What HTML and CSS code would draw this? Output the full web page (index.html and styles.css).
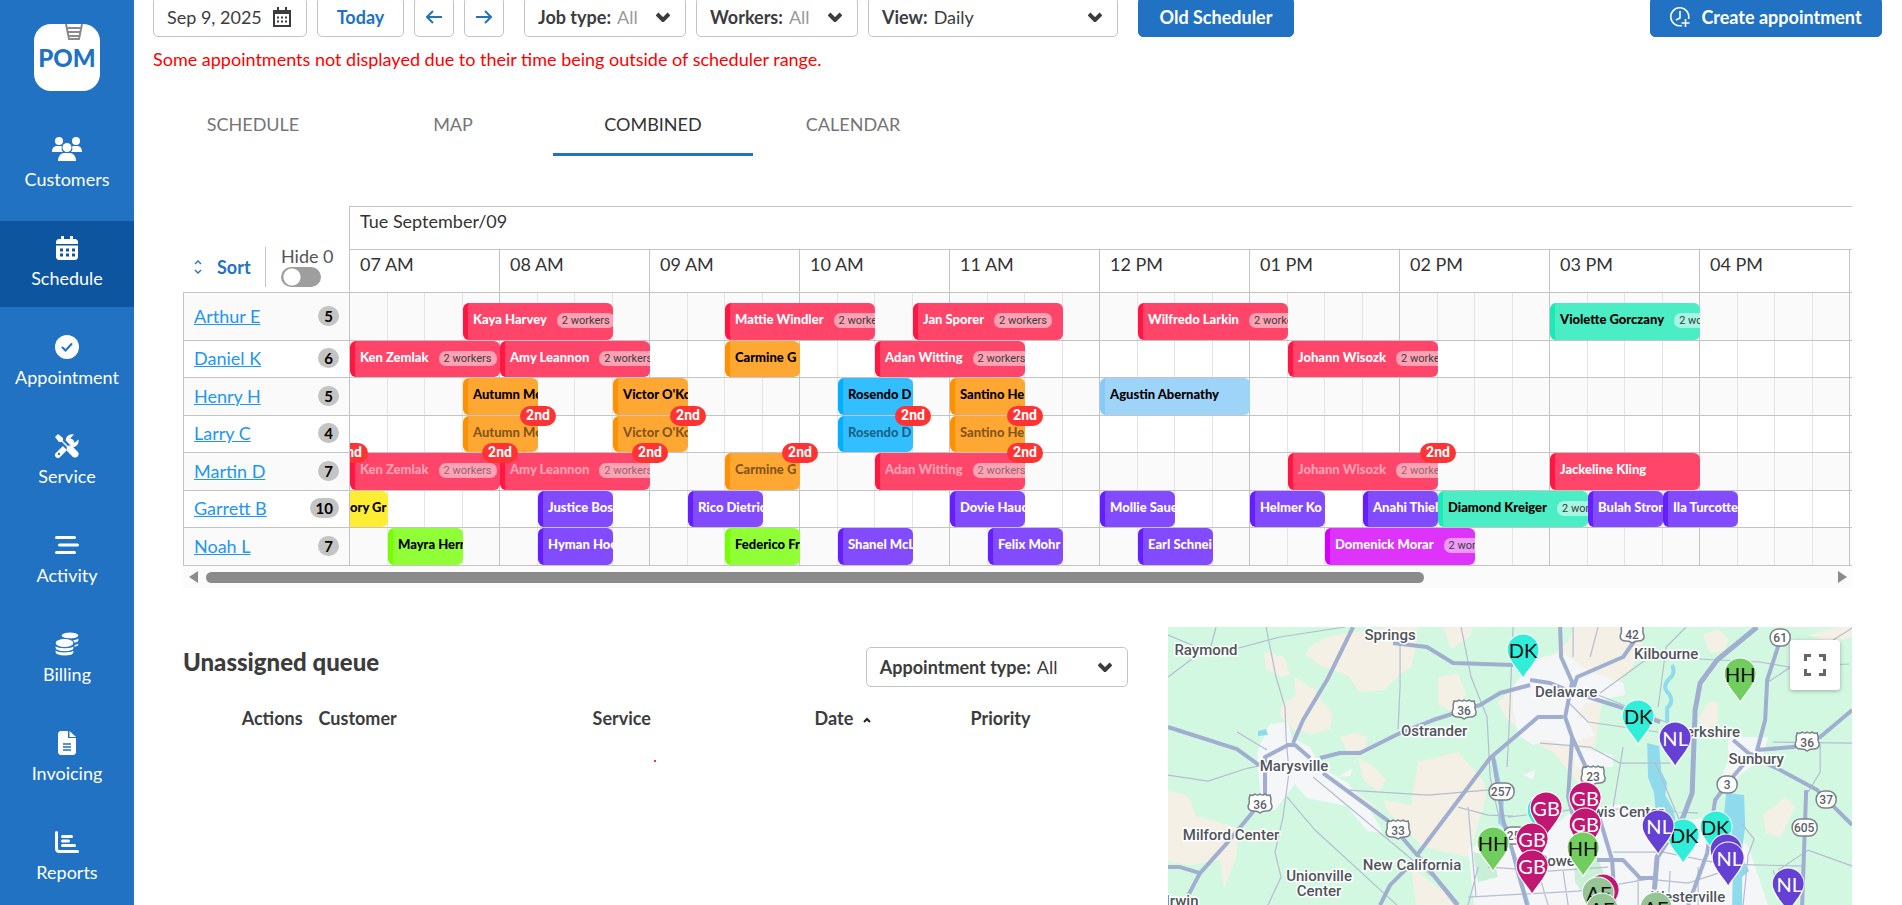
FILE: index.html
```html
<!DOCTYPE html>
<html lang="en">
<head>
<meta charset="utf-8">
<title>Schedule</title>
<link rel="stylesheet" href="styles.css">
</head>
<body>
<div class="app">
<nav class="sidebar">
  <a class="logo" href="#" aria-label="POM home">
    <svg viewBox="0 0 66 67" width="66" height="67"><rect width="66" height="67" rx="17" fill="#fff"/><path d="M32 0l3 15h10l3-15M32 4h15M33 8h13M34 12h11" fill="none" stroke="#8a8a8a" stroke-width="2"/></svg>
    <span>POM</span>
  </a>
  <a class="nav-item" href="#"><svg viewBox="0 0 30 24" width="30" height="24"><g fill="currentColor"><circle cx="7" cy="4" r="4"/><circle cx="24" cy="4" r="4"/><path d="M0 15c0-4 2-6 5-6h3c1 0 2 0 2 1-1 2 0 4 1 5zM30 15c0-4-2-6-5-6h-3c-1 0-2 0-2 1 1 2 0 4-1 5z"/><circle cx="15" cy="10.500" r="4.500"/><path d="M6 24c0-5 3-8 6-8h6c3 0 6 3 6 8z"/></g></svg>Customers</a>
  <a class="nav-item active" href="#"><svg viewBox="0 0 24 24" width="24" height="24"><path fill="currentColor" d="M6 0h3v3h6V0h3v3h3l2 2v3H1V5l2-2h3zM1 9.500h22V22l-2 2H3l-2-2z"/><path stroke="#0d559f" stroke-width="3" stroke-dasharray="3 3" d="M5 14h15M5 19h15"/></svg>Schedule</a>
  <a class="nav-item" href="#"><svg viewBox="0 0 24 24" width="24" height="24"><circle cx="12" cy="12" r="12" fill="currentColor"/><path d="M7.500 12.500l3 3 6-6.500" fill="none" stroke="#2272c3" stroke-width="2" stroke-linecap="round"/></svg>Appointment</a>
  <a class="nav-item" href="#"><svg viewBox="0 0 24 24" width="24" height="24"><path d="M3 21L16 8" stroke="currentColor" stroke-width="6" stroke-linecap="round"/><path fill="currentColor" d="M23.500 5.500a6.500 6.500 0 0 1-8.500 7.500l-4-4A6.500 6.500 0 0 1 19 .5L15.500 4l.5 4 4 .5z"/><path d="M3 3l12 12" stroke="#2272c3" stroke-width="6"/><path fill="currentColor" d="M0 3l3-3 5 4v3l5 5c2-1 4 0 5 1l5 5c2 3-1 7-5 5l-5-5c-1-1-2-3-1-5L7 8H4z"/><circle cx="4" cy="20" r="1.200" fill="#2272c3"/></svg>Service</a>
  <a class="nav-item" href="#"><svg viewBox="0 0 24 24" width="24" height="24"><path d="M1.500 4.500h18M4.500 12h18M1.500 19.500h18" stroke="currentColor" stroke-width="3" stroke-linecap="round"/></svg>Activity</a>
  <a class="nav-item" href="#"><svg viewBox="0 0 24 24" width="24" height="24"><g fill="currentColor" stroke="#2272c3" stroke-width="1.200"><path d="M6 12v-3c0 5 18 5 18 0v3c0 5-18 5-18 0z"/><path d="M6 8V4c0 5 18 5 18 0v4c0 5-18 5-18 0z"/><ellipse cx="15" cy="3.500" rx="9" ry="3.500"/><path d="M0 20v-4c0 5 19 5 19 0v4c0 5.500-19 5.500-19 0z"/><path d="M0 16v-4c0 5 19 5 19 0v4c0 5-19 5-19 0z"/><ellipse cx="9.500" cy="11" rx="9.500" ry="4.500"/></g></svg>Billing</a>
  <a class="nav-item" href="#"><svg viewBox="0 0 24 24" width="24" height="24"><path fill="currentColor" d="M5 0h8v7h8v15l-2 2H5l-2-2V2zM14.500 0L21 6h-6.500z"/><path d="M8 13h8M8 16h8M8 19h8" stroke="#2272c3" stroke-width="1.400"/></svg>Invoicing</a>
  <a class="nav-item" href="#"><svg viewBox="0 0 24 24" width="24" height="24"><path d="M1.500 2.500v16q0 3 3 3h18M7.500 6.500h9M7.500 11h6M7.500 15.500h12" fill="none" stroke="currentColor" stroke-width="3" stroke-linecap="round"/></svg>Reports</a>
</nav>

<main class="main">
  <div class="toolbar">
    <label class="field date"><input type="text" value="Sep 9, 2025" aria-label="Date"><svg viewBox="0 0 18 22" width="18" height="22"><path d="M1 5h16v15H1z" fill="none" stroke="#3c3c3c" stroke-width="2"/><path d="M0 4h18v4H0z" fill="#3c3c3c"/><path d="M5 1v4M13 1v4" stroke="#3c3c3c" stroke-width="2"/><path d="M4 11.500h10M4 15.500h10" stroke="#3c3c3c" stroke-width="2" stroke-dasharray="2 2"/></svg></label>
    <button class="btn today">Today</button>
    <button class="btn arrow" aria-label="Previous day"><svg viewBox="0 0 16 14" width="16" height="14"><path d="M16 7H1M7 1L1 7l6 6" fill="none" stroke="currentColor" stroke-width="2"/></svg></button>
    <button class="btn arrow" aria-label="Next day"><svg viewBox="0 0 16 14" width="16" height="14"><path d="M0 7h15M9 1l6 6-6 6" fill="none" stroke="currentColor" stroke-width="2"/></svg></button>
    <label class="field group filter muted"><span>Job type:</span><select><option>All</option></select><svg class="chev" viewBox="0 0 14 10" width="14" height="10"><path d="M1 2l6 6 6-6" fill="none" stroke="#3c3c3c" stroke-width="4"/></svg></label>
    <label class="field filter muted"><span>Workers:</span><select><option>All</option></select><svg class="chev" viewBox="0 0 14 10" width="14" height="10"><path d="M1 2l6 6 6-6" fill="none" stroke="#3c3c3c" stroke-width="4"/></svg></label>
    <label class="field view"><span>View:</span><select><option>Daily</option></select><svg class="chev" viewBox="0 0 14 10" width="14" height="10"><path d="M1 2l6 6 6-6" fill="none" stroke="#3c3c3c" stroke-width="4"/></svg></label>
    <button class="btn primary group old">Old Scheduler</button>
    <button class="btn primary create"><svg viewBox="0 0 20 20" width="20" height="20"><path d="M12 18.500A9 9 0 1 1 18.500 12M10 4v7l-4 2M15.500 12v8M11.500 16h8" fill="none" stroke="currentColor" stroke-width="1.600"/></svg>Create appointment</button>
  </div>
  <p class="warning">Some appointments not displayed due to their time being outside of scheduler range.</p>
  <div class="tabs" role="tablist">
    <button role="tab">SCHEDULE</button><button role="tab">MAP</button><button role="tab" class="on" aria-selected="true">COMBINED</button><button role="tab">CALENDAR</button>
  </div>

  <section class="scheduler">
    <div class="sched-head">
      <div class="controls">
        <button class="sort"><svg viewBox="0 0 8 14" width="8" height="14"><path d="M1 4l3-3 3 3M1 10l3 3 3-3" fill="none" stroke="currentColor" stroke-width="1.400"/></svg>Sort</button>
        <label class="hide">Hide 0<input type="checkbox"></label>
      </div>
      <div class="times">
        <div class="day">Tue September/09</div>
        <div class="hours"><span>07 AM</span><span>08 AM</span><span>09 AM</span><span>10 AM</span><span>11 AM</span><span>12 PM</span><span>01 PM</span><span>02 PM</span><span>03 PM</span><span>04 PM</span></div>
      </div>
    </div>
    <div class="rows">
      <div class="row"><div class="who"><a href="#">Arthur E</a><b>5</b></div><div class="line">
        <div class="ev red" style="--s:4;--n:4"><p>Kaya Harvey<i>2 workers</i></p></div>
        <div class="ev red" style="--s:11;--n:4"><p>Mattie Windler<i>2 workers</i></p></div>
        <div class="ev red" style="--s:16;--n:4"><p>Jan Sporer<i>2 workers</i></p></div>
        <div class="ev red" style="--s:22;--n:4"><p>Wilfredo Larkin<i>2 workers</i></p></div>
        <div class="ev teal" style="--s:33;--n:4"><p>Violette Gorczany<i>2 workers</i></p></div>
      </div></div>
      <div class="row"><div class="who"><a href="#">Daniel K</a><b>6</b></div><div class="line">
        <div class="ev red" style="--s:1;--n:4"><p>Ken Zemlak<i>2 workers</i></p></div>
        <div class="ev red" style="--s:5;--n:4"><p>Amy Leannon<i>2 workers</i></p></div>
        <div class="ev orange" style="--s:11;--n:2"><p>Carmine G</p></div>
        <div class="ev red" style="--s:15;--n:4"><p>Adan Witting<i>2 workers</i></p></div>
        <div class="ev red" style="--s:26;--n:4"><p>Johann Wisozk<i>2 workers</i></p></div>
      </div></div>
      <div class="row"><div class="who"><a href="#">Henry H</a><b>5</b></div><div class="line">
        <div class="ev orange" style="--s:4;--n:2"><p>Autumn Mo</p></div>
        <div class="ev orange" style="--s:8;--n:2"><p>Victor O'Ko</p></div>
        <div class="ev blue" style="--s:14;--n:2"><p>Rosendo D</p></div>
        <div class="ev orange" style="--s:17;--n:2"><p>Santino He</p></div>
        <div class="ev sky" style="--s:21;--n:4"><p>Agustin Abernathy</p></div>
      </div></div>
      <div class="row"><div class="who"><a href="#">Larry C</a><b>4</b></div><div class="line">
        <div class="ev orange second" style="--s:4;--n:2"><p>Autumn Mo</p><em>2nd</em></div>
        <div class="ev orange second" style="--s:8;--n:2"><p>Victor O'Ko</p><em>2nd</em></div>
        <div class="ev blue second" style="--s:14;--n:2"><p>Rosendo D</p><em>2nd</em></div>
        <div class="ev orange second" style="--s:17;--n:2"><p>Santino He</p><em>2nd</em></div>
      </div></div>
      <div class="row"><div class="who"><a href="#">Martin D</a><b>7</b></div><div class="line">
        <div class="ev past second"><em>2nd</em></div>
        <div class="ev red second" style="--s:1;--n:4"><p>Ken Zemlak<i>2 workers</i></p><em>2nd</em></div>
        <div class="ev red second" style="--s:5;--n:4"><p>Amy Leannon<i>2 workers</i></p><em>2nd</em></div>
        <div class="ev orange second" style="--s:11;--n:2"><p>Carmine G</p><em>2nd</em></div>
        <div class="ev red second" style="--s:15;--n:4"><p>Adan Witting<i>2 workers</i></p><em>2nd</em></div>
        <div class="ev red second" style="--s:26;--n:4"><p>Johann Wisozk<i>2 workers</i></p><em>2nd</em></div>
        <div class="ev red" style="--s:33;--n:4"><p>Jackeline Kling</p></div>
      </div></div>
      <div class="row"><div class="who"><a href="#">Garrett B</a><b>10</b></div><div class="line">
        <div class="ev yellow" style="--s:1;--n:1"><p>ory Gr</p></div>
        <div class="ev purple" style="--s:6;--n:2"><p>Justice Bos</p></div>
        <div class="ev purple" style="--s:10;--n:2"><p>Rico Dietric</p></div>
        <div class="ev purple" style="--s:17;--n:2"><p>Dovie Hauc</p></div>
        <div class="ev purple" style="--s:21;--n:2"><p>Mollie Saue</p></div>
        <div class="ev purple" style="--s:25;--n:2"><p>Helmer Ko</p></div>
        <div class="ev purple" style="--s:28;--n:2"><p>Anahi Thiel</p></div>
        <div class="ev teal" style="--s:30;--n:4"><p>Diamond Kreiger<i>2 workers</i></p></div>
        <div class="ev purple" style="--s:34;--n:2"><p>Bulah Stron</p></div>
        <div class="ev purple" style="--s:36;--n:2"><p>Ila Turcotte</p></div>
      </div></div>
      <div class="row"><div class="who"><a href="#">Noah L</a><b>7</b></div><div class="line">
        <div class="ev green" style="--s:2;--n:2"><p>Mayra Herr</p></div>
        <div class="ev purple" style="--s:6;--n:2"><p>Hyman Hoe</p></div>
        <div class="ev green" style="--s:11;--n:2"><p>Federico Fr</p></div>
        <div class="ev purple" style="--s:14;--n:2"><p>Shanel McL</p></div>
        <div class="ev purple" style="--s:18;--n:2"><p>Felix Mohr</p></div>
        <div class="ev purple" style="--s:22;--n:2"><p>Earl Schnei</p></div>
        <div class="ev magenta" style="--s:27;--n:4"><p>Domenick Morar<i>2 workers</i></p></div>
      </div></div>
    </div>
    <div class="hscroll">
      <svg viewBox="0 0 9 12" width="9" height="12"><path d="M9 0v12L0 6z" fill="#8b8b8b"/></svg>
      <div class="track"><div class="thumb"></div></div>
      <svg viewBox="0 0 9 12" width="9" height="12"><path d="M0 0v12l9-6z" fill="#8b8b8b"/></svg>
    </div>
  </section>

  <div class="lower">
    <section class="queue">
      <div class="queue-head">
        <h2>Unassigned queue</h2>
        <label class="field type"><span>Appointment type:</span><select><option>All</option></select><svg class="chev" viewBox="0 0 14 10" width="14" height="10"><path d="M1 2l6 6 6-6" fill="none" stroke="#3c3c3c" stroke-width="4"/></svg></label>
      </div>
      <table>
        <thead><tr><th class="c-actions">Actions</th><th class="c-customer">Customer</th><th class="c-service">Service</th><th class="c-date">Date<svg viewBox="0 0 8 6" width="8" height="6"><path d="M1 5l3-3 3 3" fill="none" stroke="#222" stroke-width="2"/></svg></th><th class="c-priority">Priority</th></tr></thead>
        <tbody><tr><td colspan="5"><span class="dot"></span></td></tr></tbody>
      </table>
    </section>
    <section class="map" aria-label="Map">
      <svg class="canvas" viewBox="0 0 684 278" preserveAspectRatio="xMidYMin slice">
        <defs>
          <path id="pin" d="M0 44.500C-3 37-16 27-16 16a16 16 0 0 1 32 0C16 27 3 37 0 44.500z" stroke="#fff" stroke-width="1"/>
          <path id="us" d="M-10-9q3 1 5-1 3 2 5 0 3 2 5 0 2 2 5 1l1 4q-1 3 1 7 0 5-6 5-4 0-6 2-2-2-6-2-6 0-6-5 2-4 1-7z" fill="#fff" stroke="#7a828c" stroke-width="1.500"/>
        </defs>
        <rect width="684" height="278" fill="#d3f8e2"/>
        <g fill="#f5f0e5">
          <path d="M163 9l60-9h26l-1 20-5 20-12 8-15 15-25 2-10-16-28-10-16-12 8-10zM96 25l20 5 6 18-8 2-16-8zM126 50l20 12 10 15 8 8-2 17-18 5-18-4-14-15 2-10 14-10zM172 110l15-4 12 4-2 12-18 2zM190 130l18 12 10 12-8 10-14-10zM152 140l10 8 20 12 26 20-10 10-20-18zM250 135l40-10 26 30 2 15-18 60-45-10-35-35-5-12 28 5zM0 163l20 6 8 20 42 12-2 30-12 30-4-28-30 5-22-4zM243 240l50 38h-45zM270 50l20-3 8 20-10 20-18-10zM275 0l30 0-4 10-18 12z"/>
          <path d="M330 75l20-20 50-40 6-15h60l8 15-10 25-30 35-10 60 6 30-20-10-25-30-20-10-28-25zM535 8l15-6 10 10-4 12-14 2zM540 75l10 0 0 20-12 8-8-10zM595 188l22-18 10 10-15 30-14-4zM560 110l20 8 6 12-14-2zM640 8l30-8h14v10l-20 5zM460 243l40 0 0 12-36 8z"/>
        </g>
        <g fill="#f5f6f7">
          <path d="M102 97l18-2 4 16 18 9 10 20 28 16 25 32 10 18-16-2-20-25-40-8-12-14-20 26-12 3-6-50 1-14z"/>
          <path d="M345 60l20-28 30-6 25 18 35 12 2 12-40 8-12 22-40 20-15-10-5-25zM372 88l45 4 10 16-30 10-22-6zM405 120l40 8 0 12-38 0z"/>
          <path d="M300 222l20-10 50 0 30-25 50-10 40 20 60-8 30 30 10 30 10 29H306zM560 110l40 0-6 20-30 25-14 0 10-20zM500 105l20 5-10 12zM170 150l15-9-3 8zM355 148l12-5-2 10z"/>
        </g>
        <path fill="#c9efd6" d="M305 225l20 5 5 20-20 5zM405 225l24 5 10 25-18 20-14-20z"/>
        <g fill="#90daee">
          <path d="M479 116l12 3 2 25 6 12-2 12 8 14 4 20-20 2-3-38-6-15z"/>
          <path d="M558 166l18 2 1 32-4 30 8 14-7 6 0 28h-10l1-50-8-14-1-28z"/>
          <path d="M90 104l8-2 2 6-10 1z"/>
        </g>
        <path d="M504 38q4 8-3 14-8 8 0 15 5 8-2 14l0 14M326 133l8 40-2 22 12 10M345 226l5 20 10 32" fill="none" stroke="#90daee" stroke-width="4"/>
        <g fill="none" stroke="#b4bdd2" stroke-width="1.200">
          <path d="M0 8l36 15 20 2 56-15 65-10M42 23l6-23M0 50l20-15 16-12M98 0l10 50 9 30 1 30 3 35-6 45-8 35 6 25-14 30 2 28M232 8l0 52-2 42M293 0l10 50 16 40 3 60 10 45M0 148l40 6 40-13 20-4M69 105l30 18M119 170l28 33 60 55 22 20M145 150l60 50 60 50 22 28M180 163l80 5 70-6M290 180l30 8 25 1M345 0l-4 100-2 40M372 116l50 4 30 16 50 0M300 180l8 90M405 0l0 30M430 0l-8 30M490 80l8-60 20-20M487 135l25 60 20 10M455 120l-10 60M531 32l60 3 30 5 60-3M600 55l30-20 54-34M652 115l0 30-12 20M610 243l30-20 44 16M605 115l79 1M340 190l70-8 60 0 60 4M320 240l60 4 60-4M300 270l110-6 70-12 40 4 30-10M430 68l70 28M400 75l20 20 70 10M432 66l55-40M470 278l0-30M500 278l2-34M530 240l0 38M445 225l50 0 60 12 80 2M605 243l10 35M575 278l5-50 6-16-12-15M370 244l10 34M395 244l5 34M310 240l-10 38"/>
        </g>
        <g fill="none" stroke="#a0aecf" stroke-width="4" stroke-linejoin="round">
          <path d="M0 100l69 22 22 16M97 168v-38l23-12h7l15 13M155 146l64 47 30 35 41 50M125 116l10-23 24-40 26-53M152 131l20-5h20l40-20 33-13 47-15 20-12 30-8M249 228l73-97 48-41h25M225 16l34 4 26 16 60 2M97 168l-8 12-30 36-27 30-17 32M0 240h12l20 6M242 238l-20 20-10 20M325 130l10 63 10 33 14 52"/>
          <path d="M392 0l1 30 11 25-7 35 7 20-4 60 8 30M404 110l15 33 13 50 12 40 3 45M362 53l20 3 22 9 48 15 40 15M469 10l-14 20-46 20-5 15M612 13l-13 40-2 40-8 30 36-3 27-10 32-27M565 113l20 17 27 13 37 20 35 35M585 126l-23 27-15 20-8 53-19 52M638 163l-4 115M429 233h26l17 18h17"/>
          <path stroke-width="5" d="M589 0l-40 33-17 23-5 27-3 83-9 24-26 40-4 48"/>
        </g>
        <g class="place">
          <text x="38" y="28">Raymond</text><text x="222" y="13">Springs</text><text x="266" y="109">Ostrander</text><text x="126" y="144">Marysville</text><text x="63" y="213">Milford Center</text><text x="151" y="254">Unionville</text><text x="151" y="269">Center</text><text x="244" y="243">New California</text><text x="14" y="279">Irwin</text><text x="398" y="70">Delaware</text><text x="498" y="32">Kilbourne</text><text x="540" y="110">Berkshire</text><text x="588" y="137">Sunbury</text><text x="452" y="190">Lewis Center</text><text x="392" y="239">Powell</text><text x="520" y="275">Westerville</text>
        </g>
        <g class="shield">
          <use href="#us" x="296" y="83"/><text x="296" y="88">36</text><use href="#us" x="92" y="177"/><text x="92" y="182">36</text><use href="#us" x="230" y="203"/><text x="230" y="208">33</text><use href="#us" x="464" y="7"/><text x="464" y="12">42</text><use href="#us" x="425" y="149"/><text x="425" y="154">23</text><use href="#us" x="639" y="115"/><text x="639" y="120">36</text>
          <rect x="321" y="156" width="25" height="17" rx="8"/><text x="333" y="169">257</text><rect x="335" y="200" width="24" height="17" rx="8"/><text x="349" y="213">257</text><rect x="602" y="2" width="20" height="17" rx="8"/><text x="612" y="15">61</text><rect x="549" y="149" width="20" height="17" rx="8"/><text x="559" y="162">3</text><rect x="648" y="164" width="20" height="17" rx="8"/><text x="658" y="177">37</text><rect x="624" y="192" width="25" height="17" rx="8"/><text x="636" y="205">605</text>
        </g>
        <g class="pins">
          <g class="dk"><use href="#pin" x="355" y="7"/><text x="355" y="31">DK</text><use href="#pin" x="470" y="73"/><text x="470" y="97">DK</text><use href="#pin" x="375" y="167"/></g>
          <g class="nl"><use href="#pin" x="507" y="95"/><text x="507" y="119">NL</text></g>
          <g class="hh"><use href="#pin" x="572" y="31"/><text x="572" y="55">HH</text><use href="#pin" x="325" y="200"/><text x="325" y="224">HH</text></g>
          <g class="gb"><use href="#pin" x="378" y="165"/><text x="378" y="189">GB</text><use href="#pin" x="417" y="155"/><text x="417" y="179">GB</text><use href="#pin" x="417" y="181"/><text x="417" y="205">GB</text><use href="#pin" x="364" y="196"/><text x="364" y="220">GB</text><use href="#pin" x="364" y="223"/><text x="364" y="247">GB</text><use href="#pin" x="435" y="247"/></g>
          <g class="hh"><use href="#pin" x="415" y="205"/><text x="415" y="229">HH</text></g>
          <g class="dk"><use href="#pin" x="515" y="192"/><text x="516" y="216">DK</text><use href="#pin" x="548" y="184"/><text x="547" y="208">DK</text></g>
          <g class="nl"><use href="#pin" x="490" y="183"/><text x="491" y="207">NL</text><use href="#pin" x="558" y="207"/><use href="#pin" x="560" y="215"/><text x="561" y="239">NL</text><use href="#pin" x="620" y="241"/><text x="621" y="265">NL</text></g>
          <g class="ae"><use href="#pin" x="430" y="250"/><text x="431" y="274">AE</text><use href="#pin" x="434" y="266"/><text x="434" y="290">AE</text><use href="#pin" x="488" y="265"/><text x="488" y="289">AE</text></g>
        </g>
      </svg>
      <button class="full" aria-label="Toggle fullscreen view"><svg viewBox="0 0 22 22" width="22" height="22"><path d="M1.500 7V1.500H7M15 1.500h5.500V7M20.500 15v5.500H15M7 20.500H1.500V15" fill="none" stroke="#666" stroke-width="3"/></svg></button>
    </section>
  </div>
</main>
</div>
</body>
</html>
```

FILE: styles.css
```css
* { box-sizing: border-box; }
body { margin: 0; background: #fff; color: #3c3c3c; font: 18px/24px Lato, "Open Sans", sans-serif; }
p, h2 { margin: 0; }
button, input, select { font: inherit; color: inherit; }
button { cursor: pointer; }
.app { display: flex; height: 100vh; overflow: hidden; }

.sidebar { flex: none; width: 134px; background: #2272c3; color: #fff; display: flex; flex-direction: column; gap: 13px; align-items: stretch; padding-top: 24px; }
.logo { display: grid; place-items: center; margin-bottom: 18px; text-decoration: none; }
.logo > * { grid-area: 1 / 1; }
.logo span { color: #2272c3; font-weight: 900; font-size: 24px; }
.nav-item { display: flex; flex-direction: column; align-items: center; gap: 6px; padding: 15px 0 17px; color: #fff; text-decoration: none; }
.nav-item svg { flex: none; }
.nav-item.active { background: #0d559f; }

.main { flex: 1; min-width: 0; display: flex; flex-direction: column; padding: 0 20px 0 19px; }
.toolbar { display: flex; gap: 10px; margin-top: -3px; }
.field { display: flex; align-items: center; height: 40px; padding: 0 15px 0 13px; border: 1px solid #c4c4c4; border-radius: 5px; background: #fff; }
.field span { font-weight: 700; white-space: nowrap; }
.field select { flex: 1; min-width: 0; appearance: none; border: 0; background: none; padding: 0 0 0 6px; }
.field input { flex: 1; min-width: 0; width: 0; border: 0; padding: 0; background: none; }
.muted select { color: #999; }
.chev { flex: none; }
.group { margin-left: 10px; }
.date { width: 154px; }
.filter { width: 162px; }
.view { width: 250px; }
.type { width: 262px; }
.btn { height: 40px; padding: 0; border: 1px solid #c4c4c4; border-radius: 5px; background: #fff; color: #2272c3; font-weight: 700; display: flex; align-items: center; justify-content: center; gap: 11px; }
.today { width: 87px; }
.arrow { width: 40px; }
.primary { background: #2272c3; border-color: #2272c3; color: #fff; }
.old { width: 156px; }
.create { width: 232px; margin-left: auto; }
.warning { color: #f00; margin-top: 10px; }
.tabs { display: flex; margin-top: 21px; }
.tabs button { width: 200px; height: 64px; border: 0; background: none; color: #757575; }
.tabs .on { color: #333; box-shadow: inset 0 -3px #2272c3; }

.scheduler { margin: 50px 30px 0; }
.sched-head, .row { display: grid; grid-template-columns: 167px 1fr; }
.controls { display: flex; align-items: flex-end; padding: 0 0 5px 11px; border-right: 1px solid #c4c4c4; }
.sort { display: flex; align-items: center; gap: 15px; height: 40px; padding: 0; width: 72px; border: 0; border-right: 1px solid #c4c4c4; background: none; color: #2272c3; font-weight: 700; }
.hide { display: flex; flex-direction: column; gap: 1px; line-height: 20px; margin-left: 15px; color: #555; }
.hide input { appearance: none; margin: 0; width: 40px; height: 20px; border-radius: 10px; background: radial-gradient(circle at 11px 10px, #fff 8px, transparent 9px) #9e9e9e; }
.times { min-width: 0; overflow: hidden; border-top: 1px solid #c4c4c4; color: #333; }
.day, .hours span { padding: 2px 10px 0; }
.day { height: 42px; }
.hours { display: flex; height: 43px; border-top: 1px solid #c4c4c4; }
.hours span { flex: none; width: 150px; border-right: 1px solid #c4c4c4; }

.rows { border: solid #c4c4c4; border-width: 1px 0 0 1px; }
.row { grid-template-columns: 166px 1fr; height: 37px; border-bottom: 1px solid #c4c4c4; }
.row:nth-child(odd) { height: 38px; background: #fafafa; }
.row:first-child { height: 48px; }
.row:first-child .line { padding-top: 10px; }
.who { display: flex; align-items: center; justify-content: space-between; padding: 0 10px 2px; border-right: 1px solid #c4c4c4; }
.who a { color: #2196f3; }
.who b { min-width: 20px; padding: 0 6px; border-radius: 10px; background: #c4c4c4; color: #000; font-size: 15px; line-height: 20px; text-align: center; }
.line { min-width: 0; display: grid; grid-template-columns: repeat(22, 38px 37px); grid-template-rows: 100%; clip-path: inset(-12px 0 0 0);
  background: repeating-linear-gradient(90deg, transparent 0 37px, #e4e4e4 37px 38px, transparent 38px 74px, #e4e4e4 74px 75px, transparent 75px 112px, #e4e4e4 112px 113px, transparent 113px 149px, #c4c4c4 149px 150px); }
.ev { position: relative; grid-row: 1; grid-column: var(--s) / span var(--n); min-width: 0; border-radius: 6px; border-left: 5px solid; font-size: 13px; font-weight: 900; color: #fff; }
.ev p { height: 100%; overflow: hidden; white-space: nowrap; padding: 4px 0 0 5px; border-radius: 0 6px 6px 0; color: #fff; }
.ev i { margin-left: 10px; padding: 1px 5px; border-radius: 7px; background: rgba(255,255,255,.5); color: #3c3c3c; font: 11px/14px Roboto, sans-serif; }
.ev em { position: absolute; z-index: 2; top: -10px; right: -18px; width: 36px; height: 20px; border-radius: 10px; background: #f33; color: #fff; font: 700 14px/19px Roboto, sans-serif; text-align: center; }
.ev.orange p, .ev.blue p, .ev.sky p, .ev.teal p, .ev.green p, .ev.yellow p { color: #000; }
.ev.second.red p { color: rgba(255,255,255,.5); }
.ev.second.red i { color: rgba(60,60,60,.6); }
.ev.second.orange p, .ev.second.blue p { color: rgba(0,0,0,.5); }
.red { background: #ff4569; border-color: #ff1744; }
.orange { background: #ffa733; border-color: #ff9100; }
.blue { background: #33bfff; border-color: #00b0ff; }
.sky { background: #9fd4f9; border-color: #87caf8; }
.purple { background: #834bff; border-color: #651fff; }
.teal { background: #4aedc4; border-color: #1de9b6; }
.green { background: #91ff35; border-color: #76ff03; }
.magenta { background: #dd33fa; border-color: #d500f9; }
.yellow { background: #ffed33; border: 0; border-radius: 0 6px 6px 0; }
.ev.yellow p { padding-left: 0; }
.past { grid-column: 1; width: 0; border: 0; }
.hscroll { display: flex; align-items: center; gap: 8px; height: 22px; padding: 0 5px 0 6px; background: #fbfbfb; }
.track { flex: 1; }
.thumb { width: 75%; height: 11px; border-radius: 6px; background: #8b8b8b; }

.lower { flex: 1; min-height: 0; display: grid; grid-template-columns: 29fr 21fr; gap: 40px; margin: 39px 30px 0; }
.queue { padding-top: 20px; }
.queue-head { display: flex; justify-content: space-between; }
h2 { font-size: 24px; line-height: 30px; font-weight: 900; }
table { width: 100%; margin-top: 19px; border-collapse: collapse; table-layout: fixed; }
th { padding: 0 8px; text-align: left; font-weight: 700; }
.c-actions { width: 13.5%; text-align: right; }
.c-customer { width: 29%; }
.c-service { width: 23.5%; }
.c-date { width: 16.5%; }
.c-date svg { margin-left: 10px; vertical-align: 2px; }
td { padding: 13px 0; text-align: center; }
.dot { display: inline-block; width: 2px; height: 2px; background: #f33; }
.map { position: relative; min-height: 0; overflow: hidden; }
.canvas { display: block; width: 100%; height: 100%; }
.full { position: absolute; top: 13px; right: 12px; width: 50px; height: 50px; padding: 0; border: 0; border-radius: 3px; background: #fff; box-shadow: 0 1px 4px rgba(0,0,0,.3); display: grid; place-items: center; }
.place text { font: 500 15px Roboto, sans-serif; fill: #50555b; stroke: #fff; stroke-width: 3px; paint-order: stroke; text-anchor: middle; }
.shield text { font: 500 12px Roboto, sans-serif; fill: #5a6068; text-anchor: middle; }
.shield rect { fill: #fff; stroke: #7a828c; stroke-width: 1.5px; }
.pins text { font: 20px Lato, sans-serif; text-anchor: middle; }
.dk { fill: #30eed8; } .nl { fill: #6540d4; } .hh { fill: #70cd5e; } .gb { fill: #c01872; } .ae { fill: #95c595; }
.dk text, .hh text, .ae text { fill: #111; }
.nl text, .gb text { fill: #fff; }
```
